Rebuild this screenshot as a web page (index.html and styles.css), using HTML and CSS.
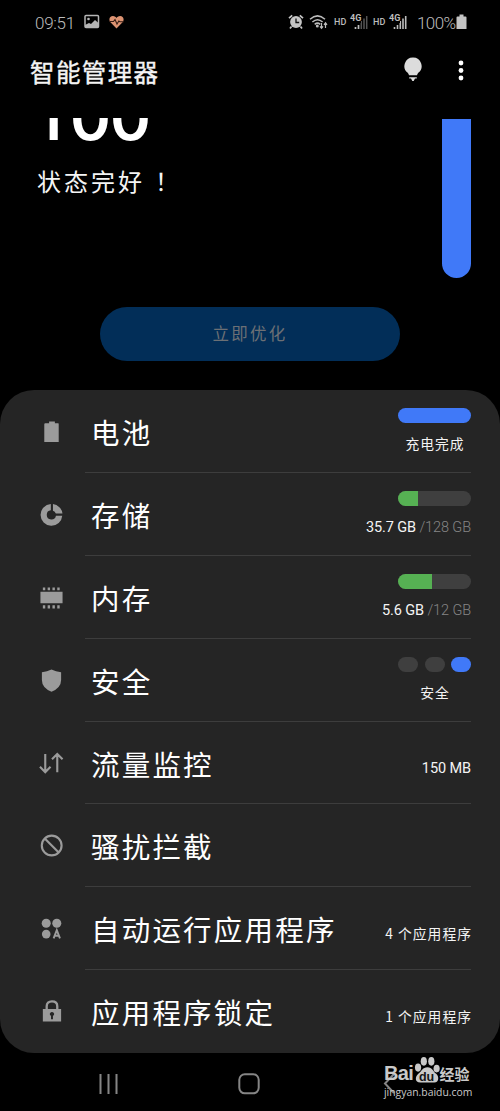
FILE: index.html
```html
<!DOCTYPE html>
<html lang="zh-CN">
<head>
<meta charset="utf-8">
<title>智能管理器</title>
<link rel="stylesheet" href="styles.css">
</head>
<body>
<div class="statusbar">
  <span class="clock">09:51</span>
  <svg class="st-image" width="16" height="16" viewBox="0 0 16 16"><rect x="1" y="1.5" width="13.5" height="12" rx="1" fill="none" stroke="#b5b5b5" stroke-width="1.5"/><path d="M1 13v-2l4-2 2 1 4-4 3.500 3v4z" fill="#b5b5b5"/><circle cx="4.500" cy="5" r="1.300" fill="#b5b5b5"/></svg>
  <svg class="st-heart" width="15" height="14" viewBox="0 0 15 14"><path d="M7.500 13.500L1.200 7C-.7 4 1 1 3.900 1 5.700 1 7 2.200 7.500 3 8 2.200 9.300 1 11.100 1 14 1 15.700 4 13.800 7z" fill="#dc9372"/><path d="M0 6.500h4.500L6 4.500l2 4.500 1.800-3 1 .8H15" fill="none" stroke="#351d14" stroke-width="1.100"/></svg>
  <span class="spacer"></span>
  <svg class="st-alarm" width="16" height="16" viewBox="0 0 16 16"><circle cx="8" cy="8" r="5.900" fill="#c6c6c6"/><path d="M1 4.200L4.200 1.300M15 4.200L11.800 1.300M3.500 12.500L2 14.600M12.500 12.500L14 14.600" stroke="#c6c6c6" stroke-width="1.700"/><path d="M8 4.600V8.500h3.200" fill="none" stroke="#111" stroke-width="1.300"/></svg>
  <svg class="st-wifi" width="20" height="16" viewBox="0 0 20 16"><g fill="none" stroke="#bcbcbc" stroke-width="1.500"><path d="M1 5.300Q8.500-1.500 16 5.300M3.400 8Q8.500 3.400 13.600 8M5.700 10.300Q8.500 8 11.300 10.300"/></g><circle cx="8.300" cy="12" r="1.500" fill="#bcbcbc"/><path d="M12.500 9v5M11 12.300l1.500 2 1.500-2M16.500 14V9M15 10.800l1.500-2 1.500 2" fill="none" stroke="#bcbcbc" stroke-width="1.200"/></svg>
  <span class="hd">HD</span>
  <span class="signal"><svg width="17" height="16" viewBox="0 0 17 16"><path d="M4.500 13v2M7.500 11v4" stroke="#bcbcbc" stroke-width="1.700"/><path d="M10.300 7v8M13 4.500V15M15.700 2v13" stroke="#555" stroke-width="1.500"/></svg><b>4G</b></span>
  <span class="hd hd2">HD</span>
  <span class="signal"><svg width="17" height="16" viewBox="0 0 17 16"><path d="M4.500 13v2M7.500 11v4M10.300 7v8M13 4.500V15M15.700 2v13" stroke="#bcbcbc" stroke-width="1.600"/></svg><b>4G</b></span>
  <span class="percent">100%</span>
  <svg class="st-batt" width="11" height="16" viewBox="0 0 11 16"><path d="M3.500.5h4v2h2q1 0 1 1V15H.5V3.500q0-1 1-1h2z" fill="#c4c4c4"/></svg>
</div>
<header class="appbar">
  <h1>智能管理器</h1>
  <svg class="bulb" width="18" height="25" viewBox="0 0 18 25"><path d="M9 .5a8.500 8.500 0 0 0-5.300 15.200q1 1 1.300 2.500h8q.3-1.500 1.300-2.500A8.500 8.500 0 0 0 9 .5z" fill="#dcdcdc"/><path d="M5.200 20.300h7.600v1.200H11L9.700 24H8.300L7 21.500H5.200z" fill="#dcdcdc"/></svg>
  <svg class="more" width="6" height="22" viewBox="0 0 6 22"><g fill="#fff"><circle cx="3" cy="3" r="2.400"/><circle cx="3" cy="10.500" r="2.400"/><circle cx="3" cy="18" r="2.400"/></g></svg>
</header>
<section class="summary">
  <div class="summary-text">
    <div class="score"><span class="one">1</span><span>00</span></div>
    <p class="state">状态完好<span lang="zh-TW">！</span></p>
  </div>
  <div class="score-bar"></div>
</section>
<button class="optimize">立即优化</button>
<main class="panel">
  <div class="row">
    <svg class="icon" viewBox="0 0 26 26"><path d="M10.500 2.500h6v2h3.500q.5 0 .5 1V24h-15V5.500q0-1 1-1h4z"/></svg>
    <div class="cell"><span class="name">电池</span><div class="info center"><div class="meter"><i class="blue" style="width:100%"></i></div><span class="value">充电完成</span></div></div>
  </div>
  <div class="row">
    <svg class="icon" viewBox="0 0 26 26"><path d="M12.300 2.100v6.600a4.800 4.800 0 1 0 5.300 5.600h6.600A11.300 11.300 0 1 1 12.300 2.100zM14.500 2.100a11.300 11.300 0 0 1 9.900 9.900h-6.900a5 5 0 0 0-3-3z"/></svg>
    <div class="cell"><span class="name">存储</span><div class="info"><div class="meter"><i class="green" style="width:28%"></i></div><span class="value latin">35.7 GB<em> /128 GB</em></span></div></div>
  </div>
  <div class="row">
    <svg class="icon" viewBox="0 0 26 26"><path d="M1.500 7h23v12h-23zM4 2.500h2.500v3H4zm5 0h2.500v3H9zm5 0h2.500v3H14zm5 0h2.500v3H19zM4 21h2.500v3.500H4zm5 0h2.500v3.500H9zm5 0h2.500v3.500H14zm5 0h2.500v3.500H19z"/></svg>
    <div class="cell"><span class="name">内存</span><div class="info"><div class="meter"><i class="green" style="width:47%"></i></div><span class="value latin">5.6 GB<em> /12 GB</em></span></div></div>
  </div>
  <div class="row">
    <svg class="icon" viewBox="0 0 26 26"><path d="M13 1.500Q17.500 4 23 4.300v8.200Q23 20.500 13 24.800 3 20.500 3 12.500V4.300Q8.500 4 13 1.500z"/></svg>
    <div class="cell"><span class="name">安全</span><div class="info center"><div class="pills"><i></i><i></i><i class="blue"></i></div><span class="value">安全</span></div></div>
  </div>
  <div class="row">
    <svg class="icon" viewBox="0 0 26 26"><path class="line" d="M6.500 3v19M1 16.500l5.500 5.500 5.500-5.500M19 22V3M13.500 8.500L19 3l5.500 5.500"/></svg>
    <div class="cell"><span class="name">流量监控</span><span class="value latin single">150 MB</span></div>
  </div>
  <div class="row">
    <svg class="icon" viewBox="0 0 26 26"><path class="line" d="M23.500 13a10.300 10.300 0 1 1-20.600 0 10.300 10.300 0 0 1 20.600 0zM6 5.800l14.500 14.500"/></svg>
    <div class="cell"><span class="name">骚扰拦截</span></div>
  </div>
  <div class="row">
    <svg class="icon" viewBox="0 0 26 26"><circle cx="7.500" cy="7.500" r="4.700"/><circle cx="18.500" cy="7.500" r="4.700"/><circle cx="7.500" cy="18.800" r="4.500"/><path class="line app-a" d="M15.200 23.300l3.300-8.500 3.300 8.500M16.300 20.500h4.400"/></svg>
    <div class="cell"><span class="name">自动运行应用程序</span><span class="value single">4 个应用程序</span></div>
  </div>
  <div class="row">
    <svg class="icon" viewBox="0 0 26 26"><path class="line lock" d="M8 11V7.500q0-5 5.500-5t5.500 5V11"/><path fill-rule="evenodd" d="M4 10.500h19V23.500H4zM13.500 13.500a2.100 2.100 0 0 0-1 4v3.500h2v-3.500a2.100 2.100 0 0 0-1-4z"/></svg>
    <div class="cell"><span class="name">应用程序锁定</span><span class="value single">1 个应用程序</span></div>
  </div>
</main>
<nav class="navbar">
  <svg class="recents" width="20" height="22" viewBox="0 0 20 22"><path d="M1.500 1v20M9.500 1v20M17.500 1v20" stroke="#858585" stroke-width="2"/></svg>
  <svg class="home" width="22" height="22" viewBox="0 0 22 22"><rect x="1.300" y="1.300" width="19.400" height="19" rx="5.500" fill="none" stroke="#858585" stroke-width="2"/></svg>
  <svg class="back" width="12" height="22" viewBox="0 0 12 22"><path d="M11 1L2 10.500l9 9.500" fill="none" stroke="#858585" stroke-width="2"/></svg>
  <div class="watermark">
    <div class="brand"><span class="bai">Bai</span><svg width="26" height="29" viewBox="0 0 27 30"><g fill="#c9c9c9"><ellipse cx="4.200" cy="12" rx="3.200" ry="4.200"/><ellipse cx="10.200" cy="5.500" rx="3.200" ry="4.500"/><ellipse cx="18" cy="5.500" rx="3.200" ry="4.500"/><ellipse cx="23.500" cy="13" rx="3.200" ry="4"/><path d="M14 11.500c5 0 6 4.500 9 7s3.500 9-2 9H6.500c-6 0-5.500-6-2-9s4.500-7 9.500-7z"/></g><text x="13" y="25.500" text-anchor="middle" class="du">du</text></svg><span class="jy">经验</span></div>
    <div class="url">jingyan.baidu.com</div>
  </div>
</nav>
</body>
</html>
```
FILE: styles.css
```css
* { box-sizing: border-box; }
body {
  margin: 0;
  width: 500px;
  height: 1111px;
  overflow: hidden;
  background: #000;
  color: #f4f4f4;
  font-family: "Noto Sans CJK SC", sans-serif;
  display: flex;
  flex-direction: column;
}
svg { display: block; flex: none; }

.statusbar {
  height: 44px;
  flex: none;
  display: flex;
  align-items: center;
  padding: 0 33px 0 35px;
  color: #bcbcbc;
  font-family: Roboto, sans-serif;
  line-height: 20px;
}
.clock { width: 39px; font-size: 17px; font-weight: 300; letter-spacing: -.3px; padding-top: 2px; white-space: nowrap; }
.st-image { margin-left: 10px; }
.st-heart { margin-left: 9px; }
.spacer { flex: 1; }
.st-wifi { margin-left: 5px; }
.hd { font-size: 9px; font-weight: 500; margin-left: 5px; width: 14px; }
.hd2 { margin-left: 5px; }
.signal { position: relative; margin-left: 3px; }
.signal b { position: absolute; left: -1px; top: -1px; font-size: 9px; line-height: 10px; font-weight: 700; background: #000; }
.percent { font-size: 17px; font-weight: 300; margin-left: 10px; width: 39px; letter-spacing: -.6px; padding-top: 2px; white-space: nowrap; }

.appbar {
  height: 74px;
  flex: none;
  display: flex;
  align-items: flex-start;
  padding: 14px 36px 0 30px;
}
.appbar h1 { margin: 0; flex: 1; font-size: 24.5px; line-height: 27px; font-weight: 400; letter-spacing: 1.4px; -webkit-text-stroke: .4px #f4f4f4; }
.bulb { margin: -1px 36px 0 0; }
.more { margin-top: 1.500px; }

.summary {
  height: 189px;
  flex: none;
  display: flex;
  justify-content: space-between;
  overflow: hidden;
  padding: 0 29px 0 37px;
}
.score {
  height: 42px;
  font: 600 62px/62px Inter, sans-serif;
  color: #fff;
  display: flex;
  align-items: flex-end;
}
.score span { margin-bottom: 11px; letter-spacing: -.8px; }
.score .one { width: 33px; margin-left: -1px; margin-right: 1px; }
.state { margin: 8px 0 0; font-size: 24px; line-height: 26px; font-weight: 400; letter-spacing: 3px; white-space: nowrap; }
.state span { font-family: "Noto Sans CJK TC", sans-serif; margin-left: 4px; }
.score-bar { width: 29px; height: 159px; margin-top: 1px; border-radius: 0 0 15px 15px; background: #4079f8; }

.optimize {
  flex: none;
  width: 300px;
  height: 54px;
  margin-left: 100px;
  padding: 0 0 2px;
  border: 0;
  border-radius: 27px;
  background: #022e58;
  color: #6c7075;
  font: 400 16.500px/24px "Noto Sans CJK SC", sans-serif;
  letter-spacing: 2.200px;
}

.panel {
  flex: none;
  height: 663px;
  margin-top: 29px;
  padding: 0 29px 0 38px;
  border-radius: 34px;
  background: #252525;
}
.row { display: flex; height: 82.900px; }
.icon { width: 25px; height: 25px; margin: 29px 21.500px 0 .5px; fill: #9b9b9b; }
.line { fill: none; stroke: #9b9b9b; stroke-width: 2.200; }
.app-a { stroke-width: 2; }
.lock { stroke-width: 2.400; }
.cell { flex: 1; display: flex; justify-content: space-between; border-bottom: 1.500px solid #3d3d3d; padding-left: 6px; }
.row:last-child .cell { border-bottom: 0; }
.name { font-size: 28.500px; line-height: 40px; margin-top: 22px; font-weight: 400; letter-spacing: 2.200px; white-space: nowrap; color: #fff; }
.info { display: flex; flex-direction: column; align-items: flex-end; padding-top: 18px; }
.center { align-items: center; }
.meter { width: 73px; height: 15px; border-radius: 8px; overflow: hidden; background: #3f3f3f; }
.meter i { display: block; height: 100%; }
.blue { background: #4079f8; }
.green { background: #56b153; }
.pills { display: flex; width: 73px; height: 15px; justify-content: space-between; }
.pills i { width: 20px; border-radius: 8px; background: #3f3f3f; }
.pills .blue { background: #4079f8; }
.value { font-size: 13.800px; line-height: 20px; margin-top: 10px; letter-spacing: 1px; margin-right: -1px; font-weight: 400; white-space: nowrap; }
.latin { font-family: Roboto, sans-serif; font-size: 14.500px; letter-spacing: -.1px; margin-top: 12px; margin-right: 0; }
.value em { font-style: normal; color: #858585; font-weight: 300; }
.single { margin-top: 36px; }
.latin.single { margin-top: 37px; }

.navbar { position: relative; flex: 1; display: flex; align-items: flex-start; padding: 20px 0 0 99px; }
.home { margin-left: 118.500px; }
.back { margin-left: 123.500px; }
.watermark { position: absolute; left: 384px; top: 4px; width: 92px; color: #c9c9c9; }
.brand { display: flex; align-items: flex-end; height: 28px; }
.bai { width: 29.500px; font: 700 20px/24px "Liberation Sans", sans-serif; letter-spacing: -.7px; }
.du { font: 700 13px "Liberation Sans", sans-serif; fill: #151515; }
.jy { font-size: 15px; line-height: 22px; font-weight: 700; white-space: nowrap; }
.url { font: 400 10.400px/14px "Open Sans", sans-serif; white-space: nowrap; }
```
